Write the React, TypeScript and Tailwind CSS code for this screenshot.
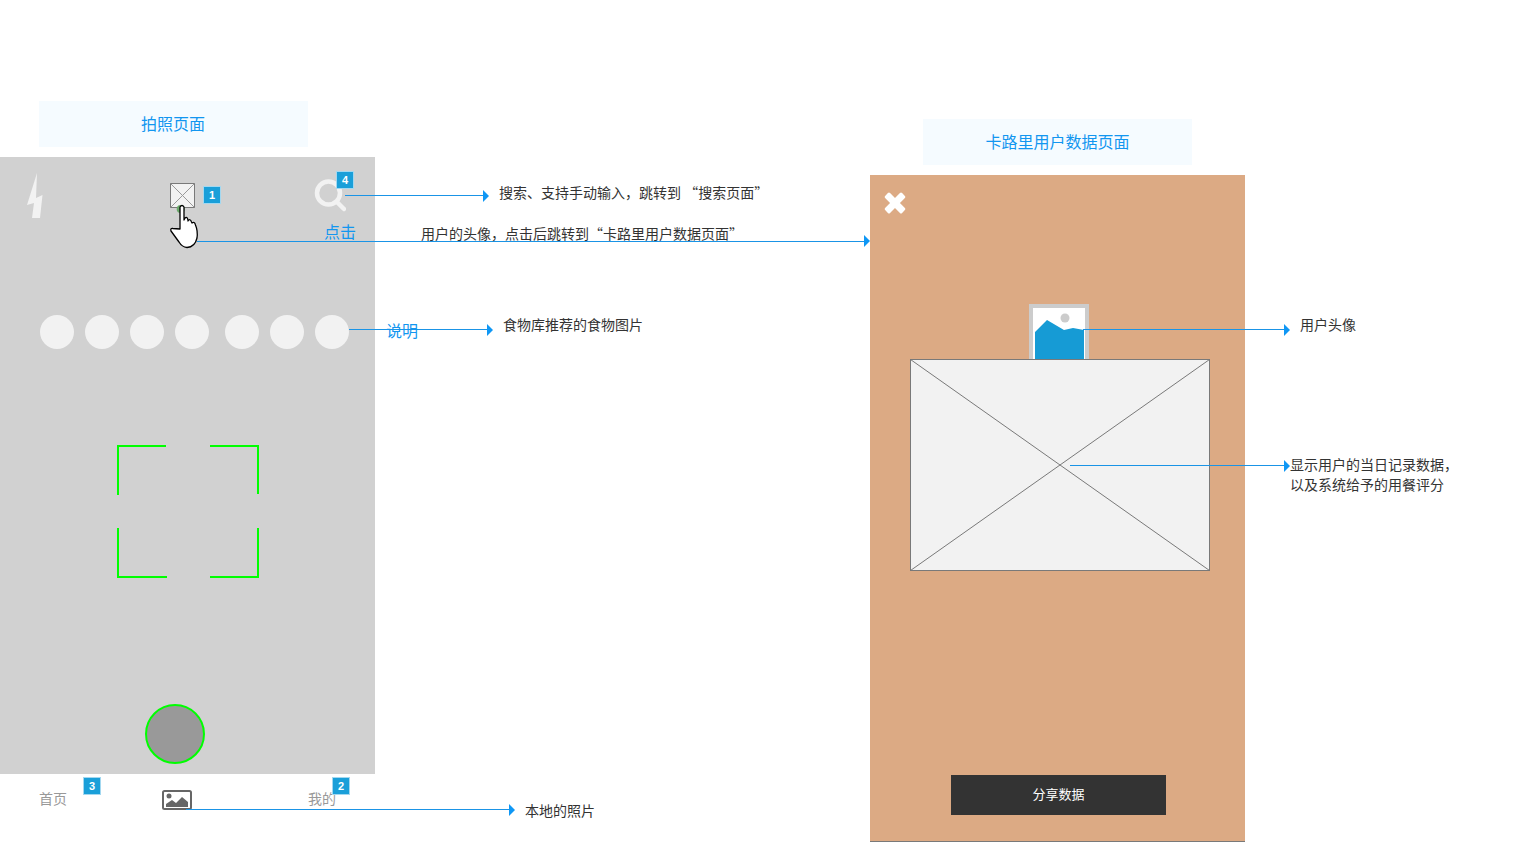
const font = { fontFamily: '"Microsoft YaHei","Noto Sans CJK SC","Liberation Sans",sans-serif' };

function Arrow({ className }: { className: string }) {
  return (
    <svg className={`absolute ${className}`} width="6" height="12" viewBox="0 0 6 12">
      <path d="M0 0 L6 6 L0 12 Z" fill="#0f97f5" />
    </svg>
  );
}

function Badge({ n, className }: { n: string; className: string }) {
  return (
    <div
      className={`absolute w-[18px] h-[18px] bg-[#1a9fd9] border border-[#a3d8f0] text-white text-[11px] font-bold flex items-center justify-center leading-none ${className}`}
      style={{ fontFamily: '"Liberation Sans",sans-serif' }}
    >
      {n}
    </div>
  );
}

function Dot() {
  return <div className="w-[34px] h-[34px] rounded-full bg-[#f2f2f2]" />;
}

function Note({ className, children }: { className: string; children: React.ReactNode }) {
  return <div className={`absolute text-[14px] leading-[20px] text-[#333333] whitespace-pre ${className}`}>{children}</div>;
}

function Title({ className, children }: { className: string; children: React.ReactNode }) {
  return (
    <div className={`w-[269px] h-[46px] mb-[10px] bg-[#f5fbff] flex items-center justify-center pb-[2px] text-[16px] text-[#1296f0] ${className}`}>
      {children}
    </div>
  );
}

function CapturePage() {
  return (
    <section className="absolute left-0 top-[101px] w-[375px] flex flex-col">
      <Title className="ml-[39px] pr-[1px]">拍照页面</Title>

      <div className="h-[617px] bg-[#d1d1d1] flex flex-col">
        {/* Top bar */}
        <div className="h-[158px] pl-[26px] pt-[15px] flex items-start">
          <svg className="shrink-0" width="18" height="47" viewBox="0 0 18 47">
            <path d="M11 1 L1 33 L8 31 L6 46 L14 46 L16.5 23 L10 26 Z" fill="#f2f2f2" />
          </svg>
          <div className="relative ml-[126px] mt-[11px] w-[25px] h-[25px]">
            <svg width="25" height="25" viewBox="0 0 25 25">
              <rect x="0.5" y="0.5" width="24" height="24" fill="#f2f2f2" stroke="#797979" />
              <path d="M0.5 0.5 L24.5 24.5 M24.5 0.5 L0.5 24.5" stroke="#999" strokeWidth="1" />
            </svg>
            <Badge n="1" className="left-[33px] top-[3px]" />
            <svg className="absolute left-[-2px] top-[20px]" width="32" height="46" viewBox="0 0 32 46">
              <circle cx="12.7" cy="6" r="4" fill="#6aa86a" />
              <path
                d="M12 26 L12 4 Q14 1 16 4 L16 17 L17 15 Q19 13 20 17 L20 18 Q22 15 23.5 19 L24 20 Q26.5 18 27.5 22 Q30 28 29 35 Q27 44 19 44.5 Q14 44 11 39 L3 28 Q2 25 5 25.5 Z"
                fill="#fff"
                stroke="#000"
                strokeWidth="1.3"
                strokeLinejoin="round"
              />
            </svg>
          </div>
          <div className="relative ml-[119px] mt-[6px] w-[32px] h-[34px]">
            <svg width="32" height="34" viewBox="0 0 32 34">
              <circle cx="14.5" cy="15" r="11.5" fill="none" stroke="#f2f2f2" strokeWidth="4.5" />
              <path d="M23 24 L30 31" stroke="#f2f2f2" strokeWidth="4.5" strokeLinecap="round" />
            </svg>
            <Badge n="4" className="left-[22px] top-[-7px]" />
          </div>
        </div>

        {/* Recommended foods */}
        <div className="pl-[39.5px] flex gap-[16px]">
          <div className="flex gap-[11px]">
            <Dot />
            <Dot />
            <Dot />
            <Dot />
          </div>
          <div className="flex gap-[11px]">
            <Dot />
            <Dot />
            <Dot />
          </div>
        </div>

        {/* Viewfinder */}
        <div className="ml-[117px] mt-[96px] w-[142px] h-[133px] flex flex-col justify-between">
          <div className="flex justify-between items-start">
            <div className="w-[49px] h-[50px] border-l-2 border-t-2 border-[#00ff00]" />
            <div className="w-[49px] h-[49px] border-r-2 border-t-2 border-[#00ff00]" />
          </div>
          <div className="flex justify-between">
            <div className="w-[50px] h-[50px] border-l-2 border-b-2 border-[#00ff00]" />
            <div className="w-[49px] h-[50px] border-r-2 border-b-2 border-[#00ff00]" />
          </div>
        </div>

        {/* Shutter */}
        <div className="ml-[145px] mt-[126px] w-[60px] h-[60px] rounded-full bg-[#999999] border-2 border-[#00ff00]" />
      </div>

      {/* Tab bar */}
      <div className="flex items-start text-[14px] leading-[20px] text-[#999999]">
        <div className="relative ml-[39px] mt-[14px]">
          首页
          <Badge n="3" className="left-[44px] top-[-11px]" />
        </div>
        <svg className="ml-[95px] mt-[16px] shrink-0" width="30" height="20" viewBox="0 0 30 20">
          <rect x="1" y="1" width="28" height="18" rx="1.5" fill="#fff" stroke="#666" strokeWidth="2" />
          <circle cx="7" cy="6" r="2.5" fill="#666" />
          <path d="M4 17 L4 14 L10 10 L14 13 L20 7 L26 12 L26 17 Z" fill="#666" />
        </svg>
        <div className="relative ml-[116px] mt-[14px]">
          我的
          <Badge n="2" className="left-[24px] top-[-11px]" />
        </div>
      </div>
    </section>
  );
}

function DataPage() {
  return (
    <section className="absolute left-[870px] top-[119px] w-[375px] flex flex-col">
      <Title className="ml-[53px]">卡路里用户数据页面</Title>
      <div className="h-[667px] bg-[#dcaa84] border-b border-[#797979] flex flex-col items-start pl-[14px] pt-[17px]">
        <svg className="shrink-0" width="22" height="22" viewBox="0 0 22 22">
          <g fill="#fff">
            <rect x="-1" y="7.5" width="24" height="7" rx="1.5" transform="rotate(45 11 11)" />
            <rect x="-1" y="7.5" width="24" height="7" rx="1.5" transform="rotate(-45 11 11)" />
          </g>
        </svg>
        <svg className="ml-[145px] mt-[90px] shrink-0" width="60" height="55" viewBox="0 0 60 55">
          <rect x="0" y="0" width="60" height="55" fill="#cccccc" />
          <rect x="4" y="4" width="52" height="51" fill="#fff" />
          <circle cx="36" cy="14" r="4.5" fill="#cccccc" />
          <path d="M6 28 L18 16 L35 26 L44 24 L55 26 L55 55 L6 55 Z" fill="#169bd5" />
        </svg>
        <svg className="ml-[26px] shrink-0" width="300" height="212" viewBox="0 0 300 212">
          <rect x="0.5" y="0.5" width="299" height="211" fill="#f2f2f2" stroke="#797979" />
          <path d="M0.5 0.5 L299.5 211.5 M299.5 0.5 L0.5 211.5" stroke="#797979" strokeWidth="1" />
        </svg>
        <div className="ml-[67px] mt-[204px] w-[215px] h-[40px] bg-[#333333] text-white text-[13px] flex items-center justify-center pb-[2px]">
          分享数据
        </div>
      </div>
    </section>
  );
}

export default function App() {
  return (
    <div className="relative w-[1533px] h-[842px] overflow-hidden bg-white" style={font}>
      <CapturePage />
      <DataPage />

      {/* Connectors of the diagram */}
      <div className="absolute left-[345px] top-[195px] w-[140px] h-px bg-[#1a94e6]" />
      <Arrow className="left-[483px] top-[190px]" />
      <div className="absolute left-[197px] top-[241px] w-[668px] h-px bg-[#1a94e6]" />
      <Arrow className="left-[864px] top-[235px]" />
      <div className="absolute left-[349px] top-[329px] w-[140px] h-px bg-[#1a94e6]" />
      <Arrow className="left-[487px] top-[324px]" />
      <div className="absolute left-[186px] top-[809px] w-[324px] h-px bg-[#1a94e6]" />
      <Arrow className="left-[509px] top-[804px]" />
      <div className="absolute left-[1083px] top-[329px] w-[202px] h-px bg-[#1a94e6]" />
      <Arrow className="left-[1284px] top-[324px]" />
      <div className="absolute left-[1070px] top-[465px] w-[215px] h-px bg-[#1a94e6]" />
      <Arrow className="left-[1284px] top-[460px]" />

      {/* Annotations */}
      <div className="absolute left-[324px] top-[220px] text-[16px] leading-[22px] text-[#1296f0]">点击</div>
      <div className="absolute left-[386px] top-[319px] text-[16px] leading-[22px] text-[#1296f0]">说明</div>
      <Note className="left-[499px] top-[182px]">搜索、支持手动输入，跳转到 “搜索页面”</Note>
      <Note className="left-[421px] top-[223px]">用户的头像，点击后跳转到“卡路里用户数据页面”</Note>
      <Note className="left-[503px] top-[314px]">食物库推荐的食物图片</Note>
      <Note className="left-[525px] top-[800px]">本地的照片</Note>
      <Note className="left-[1300px] top-[314px]">用户头像</Note>
      <Note className="left-[1290px] top-[454px]">
        <div>显示用户的当日记录数据，</div>
        <div>以及系统给予的用餐评分</div>
      </Note>
    </div>
  );
}
